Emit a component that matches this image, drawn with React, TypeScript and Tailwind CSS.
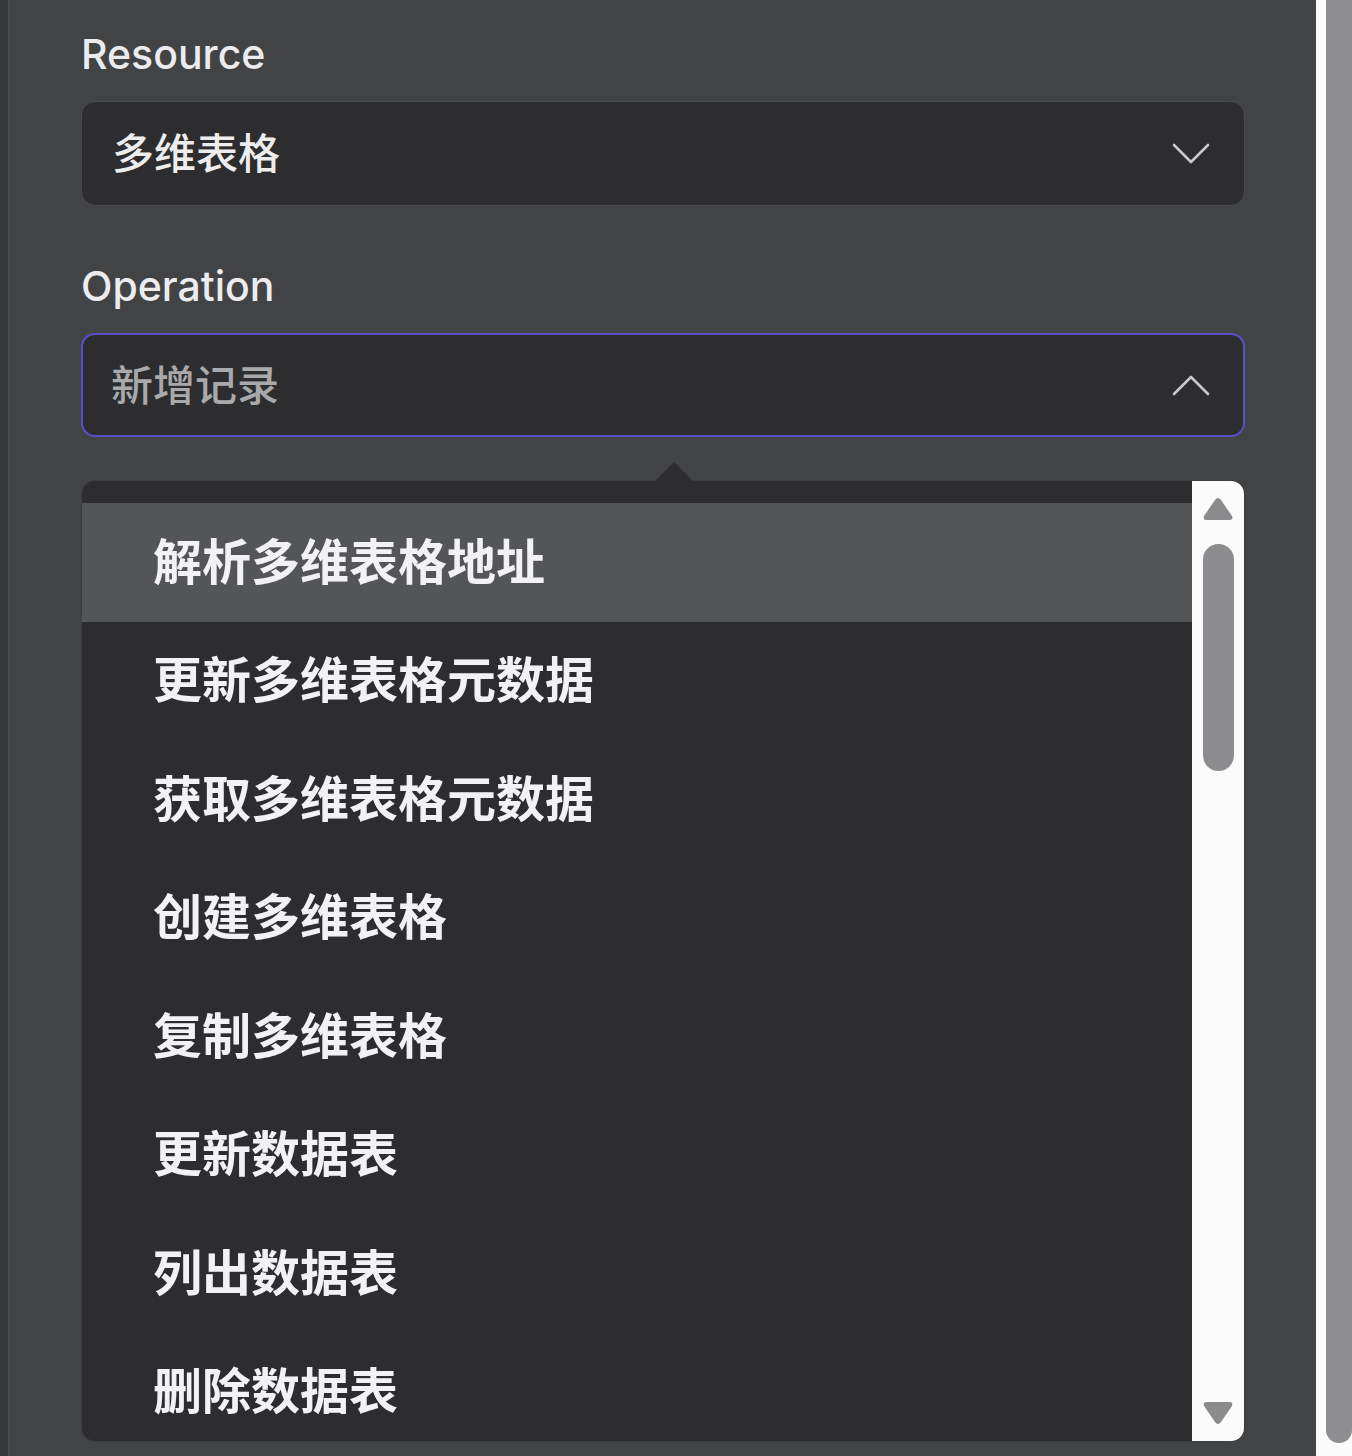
import React from 'react';

const items = [
  '解析多维表格地址',
  '更新多维表格元数据',
  '获取多维表格元数据',
  '创建多维表格',
  '复制多维表格',
  '更新数据表',
  '列出数据表',
  '删除数据表',
];

const cjk = { fontFamily: 'Inter, "Noto Sans CJK SC", sans-serif' };

function Chevron({ up }: { up?: boolean }) {
  return (
    <svg width="38" height="22" viewBox="0 0 38 22" fill="none">
      <path
        d={up ? 'M2 20 L19 3 L36 20' : 'M2 2 L19 19 L36 2'}
        stroke="#c9c9cb"
        strokeWidth="2.6"
        strokeLinecap="round"
        strokeLinejoin="round"
      />
    </svg>
  );
}

export default function App() {
  return (
    <div className="w-[1352px] h-[1456px] flex bg-[#424345] overflow-hidden" style={cjk}>
      <div className="w-[8px] bg-[#38393b]" />
      <div className="w-[2px] bg-[#4b4c4e]" />

      <div className="flex-1 flex flex-col pl-[71px] pr-[71px] pt-[30px]">
        <div className="text-[41px] leading-[48px] font-medium text-[#ececee]">Resource</div>
        <div className="mt-[23px] h-[105px] rounded-[14px] bg-[#2d2d2f] border border-[#4a4b4d] flex items-center justify-between pl-[30px] pr-[34px]">
          <span className="text-[42px] font-medium text-[#ededed]">多维表格</span>
          <Chevron />
        </div>

        <div className="mt-[56px] text-[41px] leading-[48px] font-medium text-[#ececee]">Operation</div>
        <div className="mt-[23px] h-[104px] rounded-[14px] bg-[#2d2d2f] border-2 border-[#5a4fc8] flex items-center justify-between pl-[28px] pr-[33px]">
          <span className="text-[42px] font-medium text-[#a9a9ab]">新增记录</span>
          <Chevron up />
        </div>

        <div className="relative mt-[43px]">
          <div className="absolute left-[574px] -top-[18px] w-0 h-0 border-l-[19px] border-r-[19px] border-b-[19px] border-l-transparent border-r-transparent border-b-[#2d2d2f]" />
          <div className="h-[962px] rounded-[14px] bg-[#2d2d2f] border border-[#3d3e40] overflow-hidden flex">
            <div className="flex-1 pt-[22px]">
              {items.map((t, i) => (
                <div
                  key={t + i}
                  className={`h-[118.5px] flex items-center pl-[71px] text-[49px] font-semibold text-[#f2f2f4] ${i === 0 ? 'bg-[#545557]' : ''}`}
                >
                  {t}
                </div>
              ))}
            </div>
            <div className="w-[52px] bg-[#fbfbfb] flex flex-col items-center pt-[15px] pb-[15px]">
              <svg width="32" height="26" viewBox="0 0 32 26">
                <path d="M16 2 Q17.5 2 19 4 L30 20 Q31.5 24 27 24 L5 24 Q0.5 24 2 20 L13 4 Q14.5 2 16 2 Z" fill="#8b8b8d" />
              </svg>
              <div className="mt-[22px] w-[31px] h-[227px] rounded-full bg-[#8d8d8f]" />
              <div className="flex-1" />
              <svg width="32" height="26" viewBox="0 0 32 26">
                <path d="M16 24 Q17.5 24 19 22 L30 6 Q31.5 2 27 2 L5 2 Q0.5 2 2 6 L13 22 Q14.5 24 16 24 Z" fill="#8b8b8d" />
              </svg>
            </div>
          </div>
        </div>
      </div>

      <div className="w-[10px] bg-[#fbfbfb]" />
      <div className="w-[26px] bg-[#fbfbfb] flex flex-col">
        <div className="h-[1443px] bg-[#8e8e90] rounded-b-full" />
      </div>
    </div>
  );
}
